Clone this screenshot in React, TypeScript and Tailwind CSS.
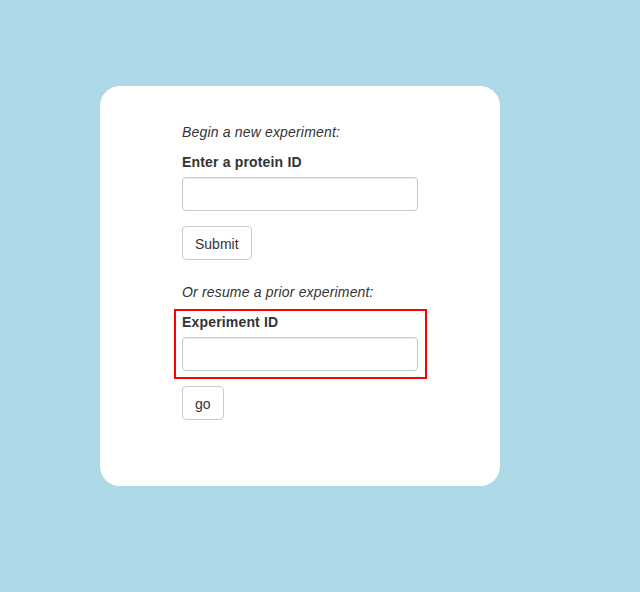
import React from 'react';

export default function App() {
  return (
    <div className="min-h-[592px] w-full bg-[#add8e6] pt-[86px] pl-[100px] font-['Liberation_Sans',Arial,sans-serif] text-[14px] leading-[20px] tracking-[0.17px] text-[#333]">
      <div className="h-[400px] w-[400px] rounded-[20px] bg-white pt-[36px]">
        <div className="mx-auto w-[236px]">
          {/* new experiment */}
          <p className="mb-[10px] italic">Begin a new experiment:</p>
          <div className="mb-[15px]">
            <label className="mb-[5px] block font-bold">Enter a protein ID</label>
            <input
              type="text"
              className="block h-[34px] w-full rounded-[4px] border border-[#ccc] px-3 shadow-[inset_0_1px_1px_rgba(0,0,0,0.075)] outline-none"
            />
          </div>
          <button className="h-[34px] rounded-[4px] border border-[#ccc] bg-white px-3 pt-px tracking-normal text-[#333]">
            Submit
          </button>

          {/* resume */}
          <p className="mt-[22px] mb-[7px] italic">Or resume a prior experiment:</p>
          <div className="-ml-[8px] w-[253px] border-2 border-[#ff0000] pt-[1px] pr-[7px] pb-[6px] pl-[6px]">
            <label className="mb-[5px] block font-bold">Experiment ID</label>
            <input
              type="text"
              className="block h-[34px] w-[236px] rounded-[4px] border border-[#ccc] px-3 shadow-[inset_0_1px_1px_rgba(0,0,0,0.075)] outline-none"
            />
          </div>
          <button className="mt-[7px] h-[34px] rounded-[4px] border border-[#ccc] bg-white px-3 pt-px tracking-normal text-[#333]">
            go
          </button>
        </div>
      </div>
    </div>
  );
}
